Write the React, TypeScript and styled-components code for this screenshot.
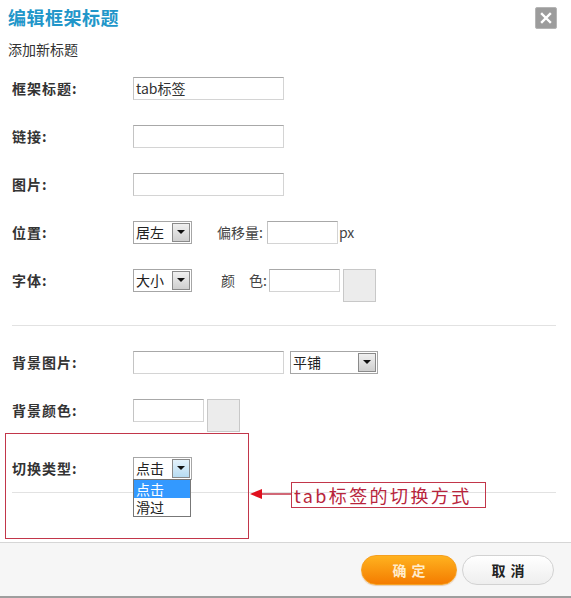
import React from "react";
import styled, { createGlobalStyle } from "styled-components";

const GlobalStyle = createGlobalStyle`
  html, body {
    margin: 0;
    padding: 0;
    background: #fff;
  }
  body {
    font-family: "Noto Sans CJK SC", "Liberation Sans", sans-serif;
    color: #333;
  }
`;

const Dialog = styled.div`
  position: relative;
  width: 571px;
  height: 598px;
  display: flex;
  flex-direction: column;
  background: #fff;
  overflow: hidden;
`;

const Header = styled.div`
  height: 34px;
  padding: 0 14px 0 8px;
  display: flex;
  align-items: center;
  justify-content: space-between;
`;

const Title = styled.div`
  font-size: 18px;
  font-weight: 700;
  color: #2196c9;
  letter-spacing: 0.5px;
`;

const CloseButton = styled.div`
  width: 20px;
  height: 20px;
  margin-top: 2px;
  border-radius: 2px;
  background: #9c9c9c;
  border: 1px solid #b5b5b5;
  display: flex;
  align-items: center;
  justify-content: center;
`;

const SubTitle = styled.div`
  margin: 5px 0 0 8px;
  height: 20px;
  line-height: 20px;
  font-size: 14px;
  color: #333;
`;

const Form = styled.div`
  margin-top: 5px;
  display: flex;
  flex-direction: column;
`;

const Row = styled.div<{ $offset?: number }>`
  height: 48px;
  margin-top: ${(p) => p.$offset ?? 0}px;
  padding-left: 12px;
  display: grid;
  grid-template-columns: 121px 1fr;
  align-items: center;
`;

const Label = styled.div`
  font-size: 14px;
  font-weight: 700;
  color: #333;
  letter-spacing: 1px;
`;

const Field = styled.div`
  display: flex;
  align-items: center;
`;

const TextInput = styled.div<{ $w: number; $ml?: number }>`
  box-sizing: border-box;
  width: ${(p) => p.$w}px;
  height: 23px;
  margin-left: ${(p) => p.$ml ?? 0}px;
  border: 1px solid #d4d4d4;
  border-top-color: #a8a8a8;
  border-left-color: #c4c4c4;
  background: #fff;
  font-size: 14px;
  line-height: 21px;
  padding-left: 2px;
  color: #333;
`;

const Inline = styled.span<{ $ml: number }>`
  margin-left: ${(p) => p.$ml}px;
  font-size: 14px;
  color: #444;
  white-space: pre;
`;

const ColorSwatch = styled.div`
  box-sizing: border-box;
  width: 33px;
  height: 33px;
  margin-left: 3px;
  margin-bottom: -10px;
  align-self: flex-start;
  background: #ececec;
  border: 1px solid #c8c8c8;
`;

const SelectWrap = styled.div<{ $ml?: number }>`
  position: relative;
  margin-left: ${(p) => p.$ml ?? 0}px;
`;

const SelectBox = styled.div<{ $w: number }>`
  box-sizing: border-box;
  width: ${(p) => p.$w}px;
  height: 23px;
  border: 1px solid #a6a6a6;
  background: #fff;
  display: flex;
  align-items: center;
  justify-content: space-between;
  padding: 0 1px 0 2px;
  font-size: 14px;
  color: #222;
`;

const ArrowButton = styled.div<{ $active?: boolean }>`
  box-sizing: border-box;
  width: 18px;
  height: 19px;
  border: 1px solid #8a8a8a;
  background: ${(p) =>
    p.$active
      ? "linear-gradient(#e4f2fb, #b7dcf2)"
      : "linear-gradient(#f0f0f0, #cfcfcf)"};
  display: flex;
  align-items: center;
  justify-content: center;

  &::after {
    content: "";
    border-left: 4px solid transparent;
    border-right: 4px solid transparent;
    border-top: 4px solid #111;
  }
`;

const OptionList = styled.div`
  position: absolute;
  top: 22px;
  left: 0;
  width: 58px;
  box-sizing: border-box;
  border: 1px solid #777;
  background: #fff;
  z-index: 2;
`;

const Option = styled.div<{ $selected?: boolean }>`
  height: 18px;
  line-height: 18px;
  overflow: hidden;
  padding-left: 2px;
  font-size: 14px;
  background: ${(p) => (p.$selected ? "#3399ff" : "#fff")};
  color: ${(p) => (p.$selected ? "#fff" : "#222")};
`;

const Divider = styled.div<{ $mt: number }>`
  height: 1px;
  margin: ${(p) => p.$mt}px 15px 0 12px;
  background: #e2e2e2;
`;

const Spacer = styled.div`
  flex: 1;
`;

const Footer = styled.div`
  height: 53px;
  border-top: 1px solid #d6d6d6;
  border-bottom: 2px solid #9e9e9e;
  background: #f6f6f6;
  display: flex;
  align-items: center;
  justify-content: flex-end;
  gap: 5px;
  padding-right: 17px;
`;

const Button = styled.div<{ $primary?: boolean }>`
  box-sizing: border-box;
  width: ${(p) => (p.$primary ? 96 : 92)}px;
  height: 30px;
  border-radius: 15px;
  display: flex;
  align-items: center;
  justify-content: center;
  font-size: 14px;
  font-weight: 700;
  letter-spacing: 5px;
  padding-left: 5px;
  color: ${(p) => (p.$primary ? "#ffeccc" : "#222")};
  background: ${(p) =>
    p.$primary
      ? "linear-gradient(#ffb21f, #f47c00)"
      : "linear-gradient(#ffffff, #eeeeee)"};
  border: 1px solid ${(p) => (p.$primary ? "#f6a020" : "#d2d2d2")};
  box-shadow: ${(p) => (p.$primary ? "0 1px 1px rgba(200,100,0,0.3)" : "none")};
`;

/* annotation drawn over the form */
const NoteBox = styled.div`
  position: absolute;
  left: 5px;
  top: 433px;
  width: 244px;
  height: 106px;
  box-sizing: border-box;
  border: 1px solid #c2364a;
  pointer-events: none;
`;

const NoteArrow = styled.svg`
  position: absolute;
  left: 249px;
  top: 488px;
`;

const NoteText = styled.div`
  position: absolute;
  left: 291px;
  top: 482px;
  width: 195px;
  height: 26px;
  box-sizing: border-box;
  border: 1px solid #c2364a;
  color: #b8243c;
  font-size: 18px;
  line-height: 24px;
  letter-spacing: 2.4px;
  padding-left: 2px;
  white-space: nowrap;
`;

function Select({
  value,
  width,
  ml,
  active,
  children,
}: {
  value: string;
  width: number;
  ml?: number;
  active?: boolean;
  children?: React.ReactNode;
}) {
  return (
    <SelectWrap $ml={ml}>
      <SelectBox $w={width}>
        <span>{value}</span>
        <ArrowButton $active={active} />
      </SelectBox>
      {children}
    </SelectWrap>
  );
}

export default function App() {
  return (
    <>
      <GlobalStyle />
      <Dialog>
        <Header>
          <Title>编辑框架标题</Title>
          <CloseButton>
            <svg width="12" height="12" viewBox="0 0 12 12">
              <path d="M2 2 L10 10 M10 2 L2 10" stroke="#fff" strokeWidth="2.4" strokeLinecap="square" />
            </svg>
          </CloseButton>
        </Header>
        <SubTitle>添加新标题</SubTitle>

        <Form>
          <Row>
            <Label>框架标题:</Label>
            <Field>
              <TextInput $w={151}>tab标签</TextInput>
            </Field>
          </Row>
          <Row>
            <Label>链接:</Label>
            <Field>
              <TextInput $w={151} />
            </Field>
          </Row>
          <Row>
            <Label>图片:</Label>
            <Field>
              <TextInput $w={151} />
            </Field>
          </Row>
          <Row>
            <Label>位置:</Label>
            <Field>
              <Select value="居左" width={59} />
              <Inline $ml={25}>偏移量:</Inline>
              <TextInput $w={71} $ml={4} />
              <Inline $ml={1}>px</Inline>
            </Field>
          </Row>
          <Row>
            <Label>字体:</Label>
            <Field>
              <Select value="大小" width={59} />
              <Inline $ml={29}>颜{"\u3000"}色:</Inline>
              <TextInput $w={71} $ml={2} />
              <ColorSwatch />
            </Field>
          </Row>

          <Divider $mt={21} />

          <Row $offset={12}>
            <Label>背景图片:</Label>
            <Field>
              <TextInput $w={151} />
              <Select value="平铺" width={88} ml={6} />
            </Field>
          </Row>
          <Row>
            <Label>背景颜色:</Label>
            <Field>
              <TextInput $w={71} />
              <ColorSwatch />
            </Field>
          </Row>
          <Row $offset={10}>
            <Label>切换类型:</Label>
            <Field>
              <Select value="点击" width={59} active>
                <OptionList>
                  <Option $selected>点击</Option>
                  <Option>滑过</Option>
                </OptionList>
              </Select>
            </Field>
          </Row>
          <Divider $mt={0} />
        </Form>

        <Spacer />

        <Footer>
          <Button $primary>确定</Button>
          <Button>取消</Button>
        </Footer>

        <NoteBox />
        <NoteArrow width="42" height="12" viewBox="0 0 42 12">
          <line x1="10" y1="6" x2="42" y2="6" stroke="#c2364a" strokeWidth="1.5" />
          <polygon points="1,6 13,1 13,11" fill="#e0101e" />
        </NoteArrow>
        <NoteText>tab标签的切换方式</NoteText>
      </Dialog>
    </>
  );
}
